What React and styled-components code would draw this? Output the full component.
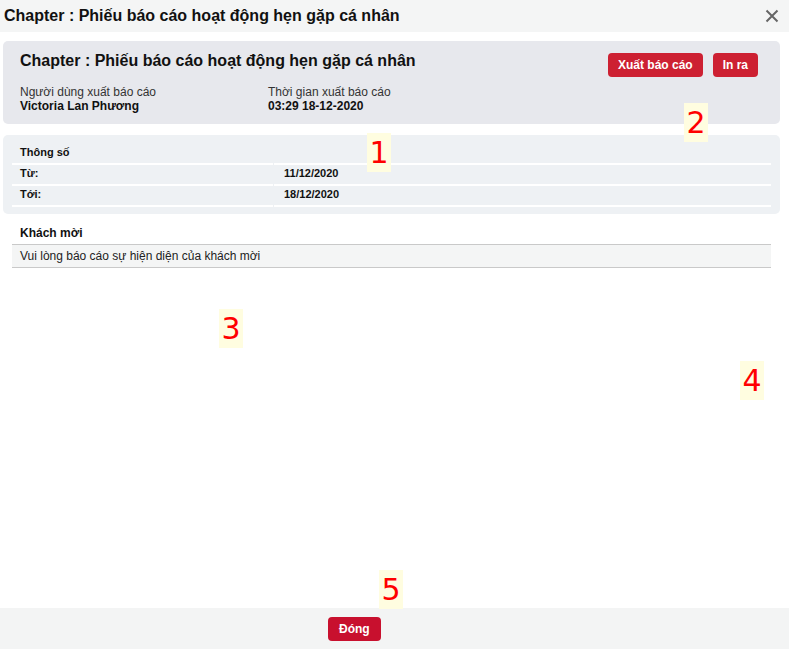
import styled, { createGlobalStyle } from 'styled-components';

const GlobalStyle = createGlobalStyle`
    html, body {
        margin: 0;
        padding: 0;
        background: #ffffff;
        font-family: "Liberation Sans", Arial, sans-serif;
        color: #111;
    }
`;

const Modal = styled.div`
    position: relative;
    width: 789px;
    height: 649px;
    display: flex;
    flex-direction: column;
    background: #fff;
`;

const ModalHeader = styled.div`
    height: 32px;
    background: #f4f5f5;
    display: flex;
    align-items: center;
    justify-content: space-between;
    padding: 0 10px 0 4px;
    h1 {
        margin: 0;
        font-size: 16px;
        font-weight: bold;
        color: #111;
    }
`;

const CloseButton = styled.button`
    border: none;
    background: none;
    padding: 0;
    width: 14px;
    height: 14px;
    display: flex;
    cursor: pointer;
`;

const ModalBody = styled.div`
    flex: 1;
    padding: 9px 9px 0 3px;
    display: flex;
    flex-direction: column;
    gap: 11px;
`;

const ReportCard = styled.div`
    background: #e7e8ed;
    border-radius: 5px;
    height: 83px;
    box-sizing: border-box;
    padding: 11px 22px 0 17px;
    display: flex;
    justify-content: space-between;
    h2 {
        margin: 0 0 15px 0;
        font-size: 16px;
        font-weight: bold;
    }
`;

const MetaRow = styled.div`
    display: grid;
    grid-template-columns: 248px 200px;
    font-size: 12px;
    line-height: 14px;
    span { display: block; color: #333; }
    b { display: block; }
`;

const Actions = styled.div`
    display: flex;
    gap: 10px;
    padding-top: 1px;
`;

const RedButton = styled.button`
    height: 24px;
    padding: 0 ${p => p.$pad || 10}px;
    border: none;
    border-radius: 4px;
    background: ${p => p.$dark ? '#c8102e' : '#cd2032'};
    color: #fff;
    font-family: "Liberation Sans", Arial, sans-serif;
    font-size: 12px;
    font-weight: bold;
    cursor: pointer;
`;

const ParamsCard = styled.div`
    background: #eef1f4;
    border-radius: 5px;
    height: 79px;
    box-sizing: border-box;
    padding: 7px 9px 0 9px;
`;

const ParamRow = styled.div`
    display: grid;
    grid-template-columns: 261px 1fr;
    column-gap: 1px;
    font-size: 11px;
    font-weight: bold;
    height: 21px;
    line-height: 21px;
    div {
        border-bottom: 2px solid #fff;
        padding-left: 8px;
    }
    div + div { padding-left: 10px; }
`;

const SectionTitle = styled.div`
    font-size: 12px;
    font-weight: bold;
    padding: 1px 0 0 17px;
    height: 18px;
`;

const NoticeRow = styled.div`
    margin: 0 9px 0 9px;
    border-top: 1px solid #c9c9c9;
    border-bottom: 1px solid #c9c9c9;
    background: #f4f5f5;
    font-size: 12px;
    height: 22px;
    line-height: 22px;
    padding-left: 8px;
    color: #222;
`;

const ModalFooter = styled.div`
    height: 41px;
    background: #f3f4f4;
    display: flex;
    align-items: center;
    padding-left: 328px;
    padding-top: 1px;
    box-sizing: border-box;
`;

const Marker = styled.span`
    position: absolute;
    left: ${p => p.$x}px;
    top: ${p => p.$y}px;
    width: 24px;
    height: 39px;
    background: #fffde0;
    color: #ff0000;
    font-family: "DejaVu Sans", sans-serif;
    font-size: 30px;
    line-height: 39px;
    text-align: center;
`;

const markers = [
    { n: 1, x: 367, y: 133 },
    { n: 2, x: 684, y: 103 },
    { n: 3, x: 219, y: 309 },
    { n: 4, x: 740, y: 361 },
    { n: 5, x: 379, y: 570 },
];

const App = () => {
    return (
        <Modal>
            <GlobalStyle />
            <ModalHeader>
                <h1>Chapter : Phiếu báo cáo hoạt động hẹn gặp cá nhân</h1>
                <CloseButton aria-label="close">
                    <svg width="14" height="14" viewBox="0 0 14 14">
                        <path d="M1.5 1.5 L12.5 12.5 M12.5 1.5 L1.5 12.5" stroke="#666" strokeWidth="2" />
                    </svg>
                </CloseButton>
            </ModalHeader>
            <ModalBody>
                <ReportCard>
                    <div>
                        <h2>Chapter : Phiếu báo cáo hoạt động hẹn gặp cá nhân</h2>
                        <MetaRow>
                            <div>
                                <span>Người dùng xuất báo cáo</span>
                                <b>Victoria Lan Phương</b>
                            </div>
                            <div>
                                <span>Thời gian xuất báo cáo</span>
                                <b>03:29 18-12-2020</b>
                            </div>
                        </MetaRow>
                    </div>
                    <Actions>
                        <RedButton>Xuất báo cáo</RedButton>
                        <RedButton>In ra</RedButton>
                    </Actions>
                </ReportCard>
                <ParamsCard>
                    <ParamRow><div>Thông số</div><div></div></ParamRow>
                    <ParamRow><div>Từ:</div><div>11/12/2020</div></ParamRow>
                    <ParamRow><div>Tới:</div><div>18/12/2020</div></ParamRow>
                </ParamsCard>
                <div>
                    <SectionTitle>Khách mời</SectionTitle>
                    <NoticeRow>Vui lòng báo cáo sự hiện diện của khách mời</NoticeRow>
                </div>
            </ModalBody>
            <ModalFooter>
                <RedButton $dark $pad={11}>Đóng</RedButton>
            </ModalFooter>
            {markers.map(m => (
                <Marker key={m.n} $x={m.x} $y={m.y}>{m.n}</Marker>
            ))}
        </Modal>
    );
};

export default App;
